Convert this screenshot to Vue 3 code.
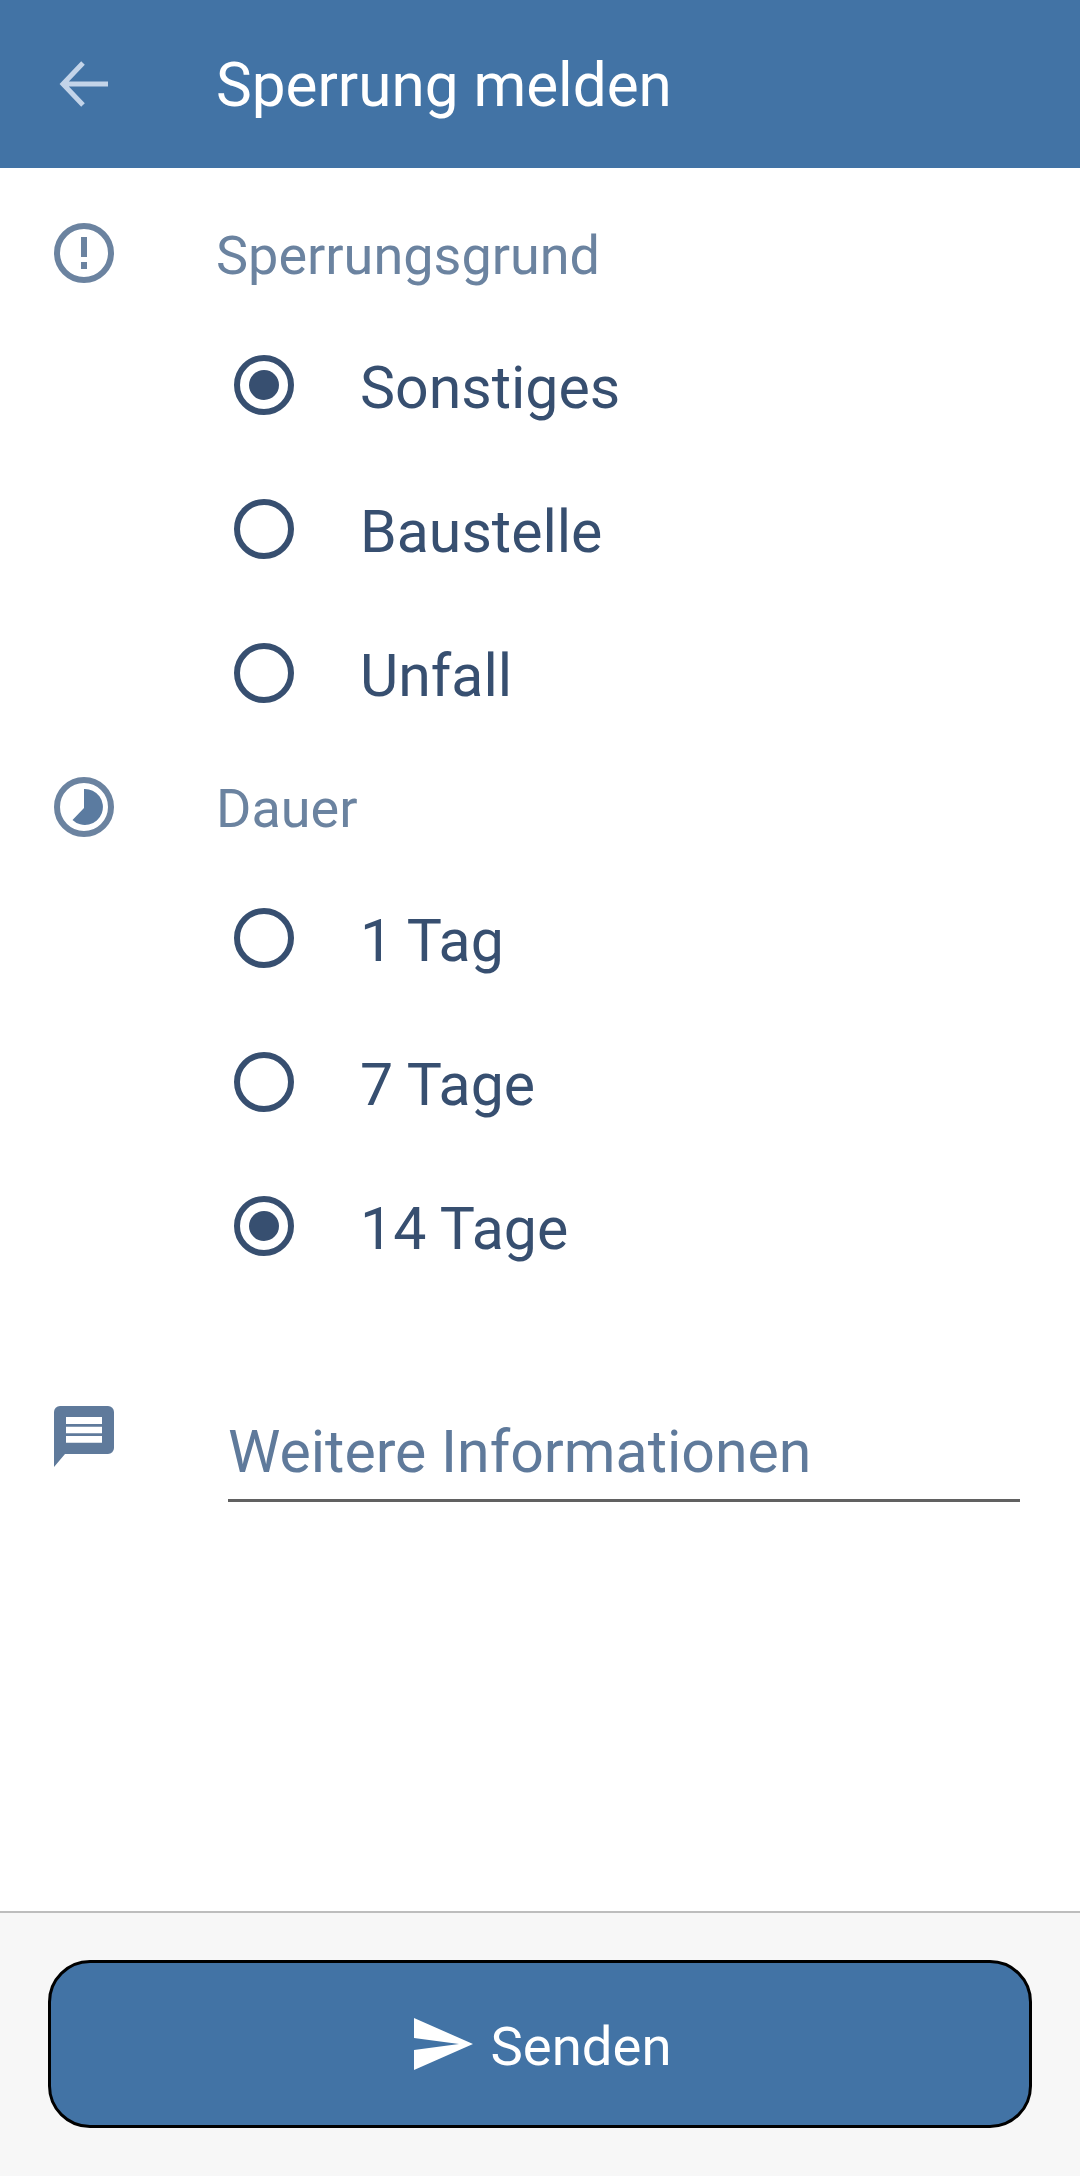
<script setup>
const groups = [
  { label: 'Sperrungsgrund', icon: 'alert', options: ['Sonstiges', 'Baustelle', 'Unfall'], selected: 'Sonstiges' },
  { label: 'Dauer', icon: 'clock', options: ['1 Tag', '7 Tage', '14 Tage'], selected: '14 Tage' }
]
</script>

<template>
  <div class="page">
    <header class="top-bar">
      <svg class="back-icon" viewBox="0 0 50 46" width="50" height="46">
        <path d="M50 23H5M25 2 5 23l20 21" fill="none" stroke="#c3d4e9" stroke-width="5" />
      </svg>
      <h1 class="title">Sperrung melden</h1>
    </header>

    <main class="content">
      <section v-for="g in groups" :key="g.label" class="group">
        <div class="group-head">
          <div class="icon-col">
            <svg v-if="g.icon === 'alert'" class="alert-icon" viewBox="0 0 60 60" width="60" height="60">
              <circle cx="30" cy="30" r="27" fill="none" stroke="#6b83a0" stroke-width="6" />
              <rect x="27" y="14" width="6" height="20" fill="#6b83a0" />
              <rect x="27" y="39" width="6" height="7" fill="#6b83a0" />
            </svg>
            <svg v-else viewBox="0 0 60 60" width="60" height="60">
              <circle cx="30" cy="30" r="27" fill="none" stroke="#6b83a0" stroke-width="6" />
              <path d="M30 12A18 18 0 1 1 18.500 43L30 31Z" fill="#5b7ba0" />
            </svg>
          </div>
          <span class="group-label">{{ g.label }}</span>
        </div>
        <label v-for="o in g.options" :key="o" class="radio-row">
          <span class="radio" :class="{ on: o === g.selected }"></span>
          <span class="radio-text">{{ o }}</span>
        </label>
      </section>

      <div class="info-row">
        <div class="icon-col">
          <svg viewBox="0 0 60 62" width="60" height="62">
            <path d="M6 0H54a6 6 0 0 1 6 6V42a6 6 0 0 1-6 6H11L0 61V6a6 6 0 0 1 6-6Z" fill="#5f7a9b" />
            <path d="M12 11H48V18H12ZM12 20.700H48V27.300H12ZM12 30H48V36.700H12Z" fill="#fff" />
          </svg>
        </div>
        <div class="info-input">Weitere Informationen</div>
      </div>
    </main>

    <footer class="bottom-bar">
      <button class="send-btn">
        <svg viewBox="0 0 59 52" width="59" height="52">
          <path d="M0 0 59 26 0 52V32L45 26 0 20Z" fill="#fff" />
        </svg>
        <span>Senden</span>
      </button>
    </footer>
  </div>
</template>

<style>
html, body {
  margin: 0;
  background: #fff;
}
</style>

<style scoped>
.page {
  width: 1080px;
  height: 2176px;
  display: flex;
  flex-direction: column;
  font-family: Roboto, "Noto Sans", sans-serif;
  background: #fff;
}

.top-bar {
  height: 168px;
  flex-shrink: 0;
  background: #4273a5;
  display: flex;
  align-items: center;
  padding-left: 58px;
  box-sizing: border-box;
}
.back-icon {
  margin-right: 108px;
}
.title {
  margin: 0;
  padding-top: 3px;
  font-size: 60.2px;
  font-weight: 400;
  color: #fff;
}

.content {
  flex: 1;
  padding-top: 50px;
}
.group + .group {
  margin-top: 26px;
}
.group-head {
  display: flex;
  align-items: center;
  height: 72px;
}
.icon-col {
  width: 216px;
  padding-left: 54px;
  box-sizing: border-box;
  flex-shrink: 0;
  display: flex;
}
.alert-icon {
  margin-top: -2px;
}
.group-label {
  font-size: 54px;
  color: #6b83a0;
  padding-top: 2px;
}

.radio-row {
  display: flex;
  align-items: center;
  height: 144px;
  padding-left: 234px;
}
.group-head + .radio-row {
  margin-top: 23px;
}
.radio {
  width: 60px;
  height: 60px;
  box-sizing: border-box;
  border: 6px solid #374f70;
  border-radius: 50%;
  display: flex;
  align-items: center;
  justify-content: center;
  margin-right: 66px;
}
.radio.on::after {
  content: '';
  width: 30px;
  height: 30px;
  border-radius: 50%;
  background: #374f70;
}
.radio-text {
  font-size: 59px;
  color: #374f70;
  padding-top: 4px;
}

.info-row {
  display: flex;
  margin-top: 108px;
}
.info-input {
  width: 792px;
  margin-left: 12px;
  box-sizing: border-box;
  height: 94px;
  margin-top: 2px;
  border-bottom: 3px solid #616161;
  font-size: 59px;
  color: #5f7a9b;
  line-height: 88px;
}

.bottom-bar {
  height: 265px;
  flex-shrink: 0;
  box-sizing: border-box;
  border-top: 2px solid #bdbdbd;
  background: #f7f7f7;
  padding: 47px 48px 0;
}
.send-btn {
  width: 984px;
  height: 168px;
  box-sizing: border-box;
  background: #4273a5;
  border: 3px solid #000;
  border-radius: 42px;
  display: flex;
  align-items: center;
  justify-content: center;
  gap: 17px;
  font-family: inherit;
  font-size: 54.5px;
  color: #fff;
  padding: 0 0 0 6px;
}
.send-btn span {
  padding-top: 4px;
}
</style>
